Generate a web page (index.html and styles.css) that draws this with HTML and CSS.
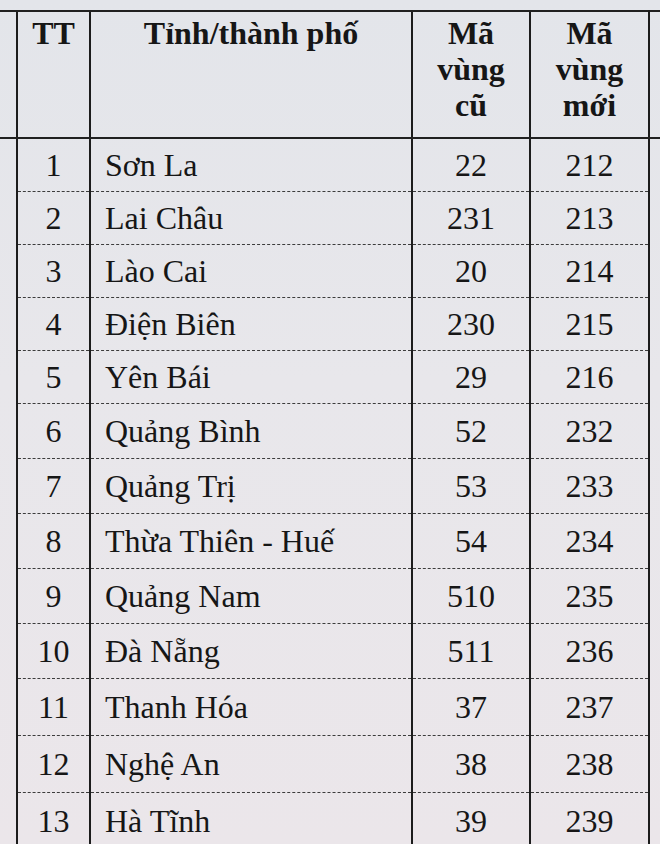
FILE: index.html
```html
<!DOCTYPE html>
<html lang="vi">
<head>
<meta charset="utf-8">
<title>Mã vùng</title>
<link rel="stylesheet" href="styles.css">
</head>
<body>
<div class="paper">
<table class="codes">
  <colgroup>
    <col class="c-edge-l">
    <col class="c-tt">
    <col class="c-name">
    <col class="c-old">
    <col class="c-new">
    <col class="c-edge-r">
  </colgroup>
  <thead>
    <tr class="head">
      <th class="edge"></th>
      <th class="tt">TT</th>
      <th class="name">Tỉnh/thành phố</th>
      <th class="num">Mã<br>vùng<br>cũ</th>
      <th class="num">Mã<br>vùng<br>mới</th>
      <th class="edge"></th>
    </tr>
  </thead>
  <tbody>
    <tr class="ra"><td class="edge"></td><td class="tt">1</td><td class="name">Sơn La</td><td class="num">22</td><td class="num">212</td><td class="edge"></td></tr>
    <tr class="ra"><td class="edge"></td><td class="tt">2</td><td class="name">Lai Châu</td><td class="num">231</td><td class="num">213</td><td class="edge"></td></tr>
    <tr class="ra"><td class="edge"></td><td class="tt">3</td><td class="name">Lào Cai</td><td class="num">20</td><td class="num">214</td><td class="edge"></td></tr>
    <tr class="ra"><td class="edge"></td><td class="tt">4</td><td class="name">Điện Biên</td><td class="num">230</td><td class="num">215</td><td class="edge"></td></tr>
    <tr class="ra"><td class="edge"></td><td class="tt">5</td><td class="name">Yên Bái</td><td class="num">29</td><td class="num">216</td><td class="edge"></td></tr>
    <tr class="rb"><td class="edge"></td><td class="tt">6</td><td class="name">Quảng Bình</td><td class="num">52</td><td class="num">232</td><td class="edge"></td></tr>
    <tr class="rb"><td class="edge"></td><td class="tt">7</td><td class="name">Quảng Trị</td><td class="num">53</td><td class="num">233</td><td class="edge"></td></tr>
    <tr class="rb"><td class="edge"></td><td class="tt">8</td><td class="name">Thừa Thiên - Huế</td><td class="num">54</td><td class="num">234</td><td class="edge"></td></tr>
    <tr class="rb"><td class="edge"></td><td class="tt">9</td><td class="name">Quảng Nam</td><td class="num">510</td><td class="num">235</td><td class="edge"></td></tr>
    <tr class="rb"><td class="edge"></td><td class="tt">10</td><td class="name">Đà Nẵng</td><td class="num">511</td><td class="num">236</td><td class="edge"></td></tr>
    <tr class="rc"><td class="edge"></td><td class="tt">11</td><td class="name">Thanh Hóa</td><td class="num">37</td><td class="num">237</td><td class="edge"></td></tr>
    <tr class="rc"><td class="edge"></td><td class="tt">12</td><td class="name">Nghệ An</td><td class="num">38</td><td class="num">238</td><td class="edge"></td></tr>
    <tr class="rc"><td class="edge"></td><td class="tt">13</td><td class="name">Hà Tĩnh</td><td class="num">39</td><td class="num">239</td><td class="edge"></td></tr>
  </tbody>
</table>
</div>
</body>
</html>
```

FILE: styles.css
```css
html, body {
  margin: 0;
  padding: 0;
}

body {
  width: 660px;
  height: 844px;
  overflow: hidden;
  background: linear-gradient(180deg, #e3e5ea 0%, #e8e7eb 45%, #ebe6ea 100%);
}

.paper {
  padding-top: 10px;
}

.codes {
  width: 660px;
  table-layout: fixed;
  border-collapse: collapse;
  font-family: "Liberation Serif", "Tinos", "Times New Roman", "DejaVu Serif", serif;
  color: #161616;
}

.c-edge-l { width: 17px; }
.c-tt { width: 73px; }
.c-name { width: 322px; }
.c-old { width: 118px; }
.c-new { width: 119px; }
.c-edge-r { width: 11px; }

.codes th,
.codes td {
  padding: 0;
  font-family: "Liberation Serif", "Tinos", "Times New Roman", "DejaVu Serif", serif;
  font-size: 32px;
  line-height: 36px;
}

.head th {
  height: 122px;
  vertical-align: top;
  padding-top: 3px;
  font-weight: bold;
  text-align: center;
  border-top: 2px solid #202020;
  border-bottom: 2px solid #202020;
}

.codes .tt,
.codes .name,
.codes .num {
  border-left: 2px solid #1c1c1c;
}

.codes .num + .num {
  border-right: 2px solid #1c1c1c;
}

tbody td {
  vertical-align: middle;
}

tbody td.tt,
tbody td.name,
tbody td.num {
  border-bottom: 1.5px dashed #3c3c3c;
}

tbody td.tt,
tbody td.num {
  text-align: center;
}

tbody td.name {
  text-align: left;
  padding-left: 14px;
}

.ra td { height: 52px; }
.rb td { height: 54px; }
.rc td { height: 56px; }

.edge {
  border-left: none;
  border-right: none;
}
```
